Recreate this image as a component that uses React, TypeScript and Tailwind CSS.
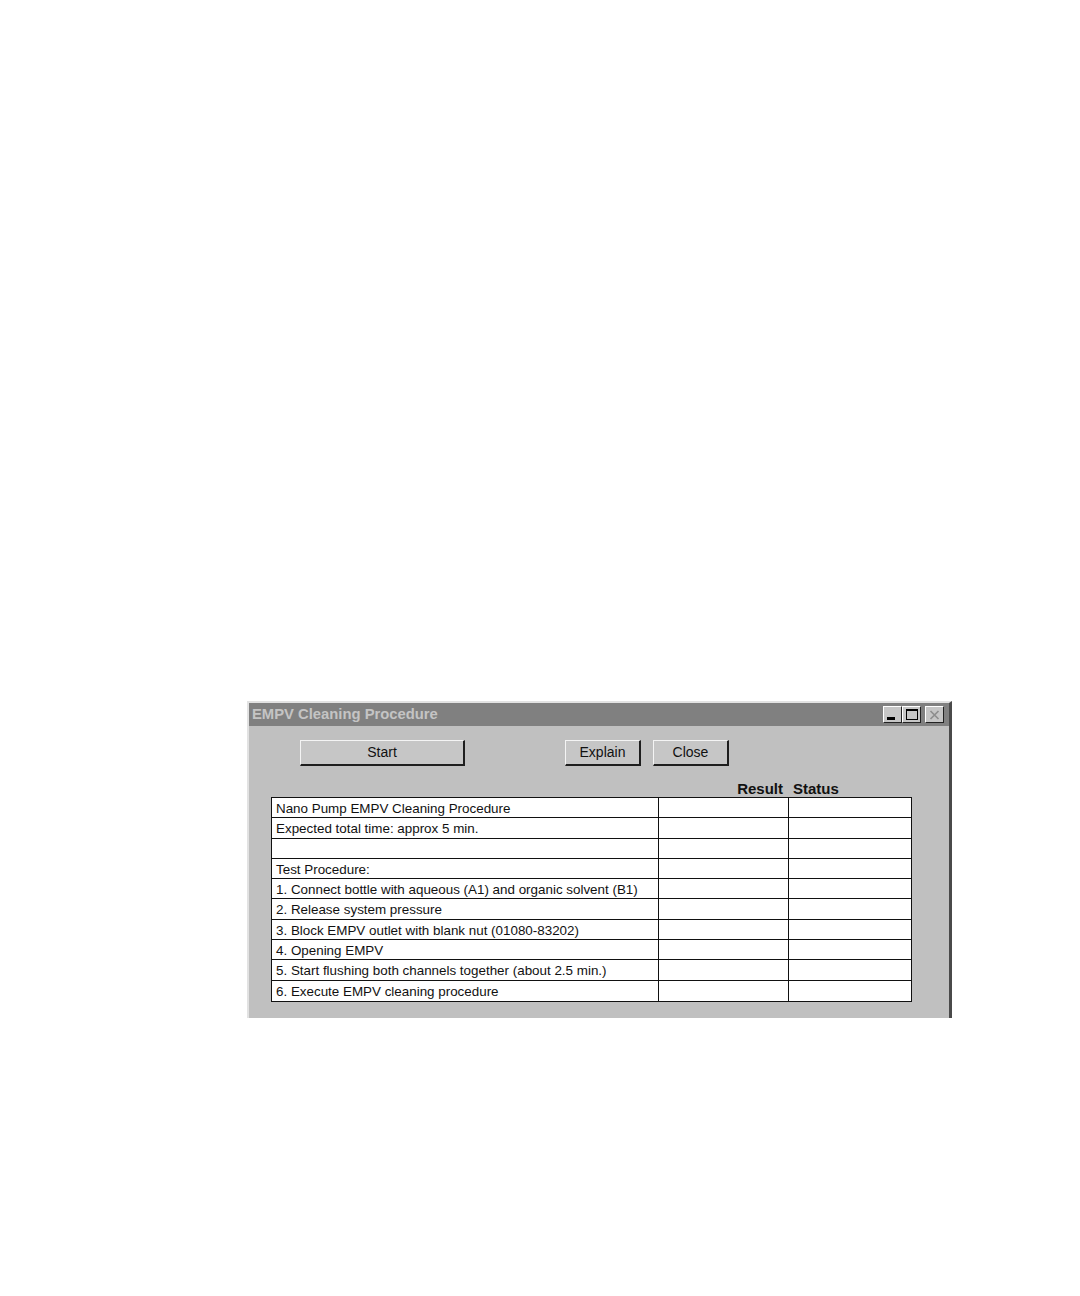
import React from "react";

const rows = [
  "Nano Pump EMPV Cleaning Procedure",
  "Expected total time: approx 5 min.",
  "",
  "Test Procedure:",
  "1. Connect bottle with aqueous (A1) and organic solvent (B1)",
  "2. Release system pressure",
  "3. Block EMPV outlet with blank nut (01080-83202)",
  "4. Opening EMPV",
  "5. Start flushing both channels together (about 2.5 min.)",
  "6. Execute EMPV cleaning procedure",
];

function WinButton({ label, w }: { label: string; w: string }) {
  return (
    <div
      className={`${w} h-[26px] flex items-center justify-center bg-[#c6c6c6] border-t border-l border-t-[#f4f4f4] border-l-[#f4f4f4] border-r-2 border-b-2 border-r-[#1e1e1e] border-b-[#1e1e1e] text-[14px] text-[#111]`}
    >
      {label}
    </div>
  );
}

function TitleBtn({ children, extra }: { children: React.ReactNode; extra?: string }) {
  return (
    <div
      className={`w-[19px] h-[17px] bg-[#c6c6c6] border-t border-l border-t-white border-l-white border-r border-b border-r-[#222] border-b-[#222] flex items-center justify-center ${extra ?? ""}`}
    >
      {children}
    </div>
  );
}

export default function App() {
  return (
    <div
      className="w-[1080px] h-[1296px] bg-white pt-[701px] pl-[247px]"
      style={{ fontFamily: '"Liberation Sans", Arial, sans-serif' }}
    >
      <div className="w-[705px] h-[317px] bg-[#c0c0c0] border-t-2 border-l-2 border-t-[#e2e2e2] border-l-[#e2e2e2] border-r-[3px] border-r-[#4a4a4a] flex flex-col">
        {/* title bar */}
        <div className="h-[23px] bg-[#808080] flex items-center justify-between pl-[3px] pr-[5px]">
          <span className="text-[14.8px] font-bold text-[#c4c4c4]">
            EMPV Cleaning Procedure
          </span>
          <div className="flex items-center">
            <TitleBtn>
              <div className="w-[8px] h-[3px] bg-black mt-[8px] mr-[3px]" />
            </TitleBtn>
            <TitleBtn>
              <div className="w-[12px] h-[11px] border border-black border-t-2" />
            </TitleBtn>
            <TitleBtn extra="ml-[4px]">
              <svg width="11" height="10" viewBox="0 0 11 10">
                <path d="M1.5 1 L9.5 9 M9.5 1 L1.5 9" stroke="#8e8e8e" strokeWidth="1.7" />
              </svg>
            </TitleBtn>
          </div>
        </div>

        {/* buttons */}
        <div className="flex mt-[14px] pl-[51px]">
          <WinButton label="Start" w="w-[165px]" />
          <div className="ml-[100px]">
            <WinButton label="Explain" w="w-[76px]" />
          </div>
          <div className="ml-[12px]">
            <WinButton label="Close" w="w-[76px]" />
          </div>
        </div>

        {/* header */}
        <div className="flex mt-[13px] pl-[22px] h-[18px] items-end text-[15px] font-bold text-[#111] leading-none pb-[1px]">
          <div className="w-[387px]" />
          <div className="w-[130px] text-right pr-[5px]">Result</div>
          <div className="w-[123px] pl-[5px]">Status</div>
        </div>

        {/* table */}
        <div className="ml-[22px] w-[641px] bg-white border border-[#111] grid grid-cols-[387px_130px_122px]">
          {rows.map((r, i) => (
            <React.Fragment key={i}>
              <div
                className={`h-[20.3px] pl-[4px] text-[13.4px] leading-[21px] text-[#111] border-r border-[#111] whitespace-nowrap ${i < rows.length - 1 ? "border-b" : ""}`}
              >
                {r}
              </div>
              <div className={`h-[20.3px] border-r border-[#111] ${i < rows.length - 1 ? "border-b" : ""}`} />
              <div className={`h-[20.3px] border-[#111] ${i < rows.length - 1 ? "border-b" : ""}`} />
            </React.Fragment>
          ))}
        </div>
      </div>
    </div>
  );
}
